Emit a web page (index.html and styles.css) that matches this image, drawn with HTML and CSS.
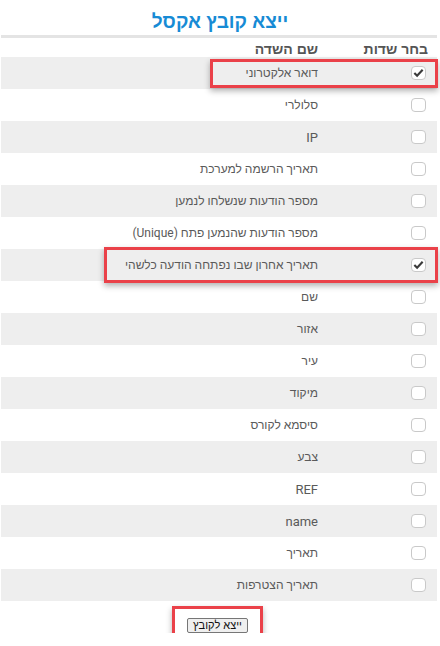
FILE: index.html
```html
<!DOCTYPE html>
<html lang="he" dir="rtl">
  <head>
    <meta charset="utf-8">
    <link rel="stylesheet" href="styles.css">
  </head>
  <body>
    <h3 class="title">ייצא קובץ אקסל</h3>
    <div class="fields">
      <div class="row head">
        <div class="cell-check">בחר שדות</div>
        <div class="cell-name">שם השדה</div>
      </div>
      <div class="row">
        <div class="cell-check"><span class="box checked"><svg viewBox="0 0 14 13"><path d="M2.5 6.5l3 3 6-6.5"/></svg></span></div>
        <div class="cell-name">דואר אלקטרוני</div>
        <span class="mark mark-mail"></span>
      </div>
      <div class="row">
        <div class="cell-check"><span class="box"></span></div>
        <div class="cell-name">סלולרי</div>
      </div>
      <div class="row">
        <div class="cell-check"><span class="box"></span></div>
        <div class="cell-name en">IP</div>
      </div>
      <div class="row">
        <div class="cell-check"><span class="box"></span></div>
        <div class="cell-name">תאריך הרשמה למערכת</div>
      </div>
      <div class="row">
        <div class="cell-check"><span class="box"></span></div>
        <div class="cell-name">מספר הודעות שנשלחו לנמען</div>
      </div>
      <div class="row">
        <div class="cell-check"><span class="box"></span></div>
        <div class="cell-name">מספר הודעות שהנמען פתח (Unique)</div>
      </div>
      <div class="row">
        <div class="cell-check"><span class="box checked"><svg viewBox="0 0 14 13"><path d="M2.5 6.5l3 3 6-6.5"/></svg></span></div>
        <div class="cell-name">תאריך אחרון שבו נפתחה הודעה כלשהי</div>
        <span class="mark mark-last"></span>
      </div>
      <div class="row">
        <div class="cell-check"><span class="box"></span></div>
        <div class="cell-name">שם</div>
      </div>
      <div class="row">
        <div class="cell-check"><span class="box"></span></div>
        <div class="cell-name">אזור</div>
      </div>
      <div class="row">
        <div class="cell-check"><span class="box"></span></div>
        <div class="cell-name">עיר</div>
      </div>
      <div class="row">
        <div class="cell-check"><span class="box"></span></div>
        <div class="cell-name">מיקוד</div>
      </div>
      <div class="row">
        <div class="cell-check"><span class="box"></span></div>
        <div class="cell-name">סיסמא לקורס</div>
      </div>
      <div class="row">
        <div class="cell-check"><span class="box"></span></div>
        <div class="cell-name">צבע</div>
      </div>
      <div class="row">
        <div class="cell-check"><span class="box"></span></div>
        <div class="cell-name en">REF</div>
      </div>
      <div class="row">
        <div class="cell-check"><span class="box"></span></div>
        <div class="cell-name en">name</div>
      </div>
      <div class="row">
        <div class="cell-check"><span class="box"></span></div>
        <div class="cell-name">תאריך</div>
      </div>
      <div class="row">
        <div class="cell-check"><span class="box"></span></div>
        <div class="cell-name">תאריך הצטרפות</div>
      </div>
    </div>
    <div class="actions">
      <span class="btn-wrap">
        <button class="btn" type="button">ייצא לקובץ</button>
        <span class="mark mark-btn"></span>
      </span>
    </div>
  </body>
</html>
```

FILE: styles.css
```css
* {
  box-sizing: border-box;
}

body {
  margin: 0;
  width: 440px;
  background: #fff;
  font-family: Roboto, "Liberation Sans", sans-serif;
  font-size: 12px;
  color: #5a5a5a;
}

.title {
  margin: 0;
  height: 35px;
  padding-top: 10px;
  text-align: center;
  font-family: "Liberation Sans", sans-serif;
  font-size: 19px;
  line-height: 23px;
  font-weight: bold;
  color: #178bd5;
}

.fields {
  width: 436px;
  margin-right: 3px;
  border-top: 3px solid #e4e4e4;
}

.row {
  position: relative;
  display: grid;
  grid-template-columns: 110px 1fr;
  height: 32px;
  align-items: center;
}

.row:nth-child(even) {
  background: #eeeeee;
}

.row.head {
  height: 19px;
  font-family: "Liberation Sans", sans-serif;
  font-size: 14px;
  font-weight: bold;
  color: #555;
  align-items: end;
}

.head .cell-check {
  padding-right: 9px;
}

.cell-check {
  padding-right: 11px;
  display: flex;
  align-items: center;
}

.cell-name {
  padding-right: 9px;
}

.cell-name.en {
  font-size: 13px;
}

.box {
  display: block;
  width: 15px;
  height: 14px;
  border: 1px solid #c9c9c9;
  border-radius: 4px;
  background: #fff;
}

.box svg {
  display: block;
  width: 13px;
  height: 12px;
  fill: none;
  stroke: #3b3b3b;
  stroke-width: 2.3;
}

.mark {
  position: absolute;
  border: 3px solid #ea4149;
  box-shadow: 0 3px 6px rgba(0, 0, 0, 0.3);
  pointer-events: none;
}

.mark-mail {
  top: 2px;
  bottom: 1px;
  left: 209px;
  right: -1px;
}

.mark-last {
  top: -2px;
  bottom: -2px;
  left: 103px;
  right: -1px;
}

.actions {
  display: flex;
  justify-content: center;
  padding-top: 17px;
  padding-right: 5px;
}

.btn-wrap {
  position: relative;
  display: block;
}

.btn {
  display: block;
  margin: 0;
  padding: 0 5px;
  height: 15px;
  font-family: "Liberation Sans", sans-serif;
  font-size: 11px;
  line-height: 13px;
  color: #111;
  background: #efefef;
  border: 1px solid #767676;
  border-radius: 2px;
}

.mark-btn {
  top: -12px;
  bottom: -7px;
  left: -15px;
  right: -15px;
}
```
